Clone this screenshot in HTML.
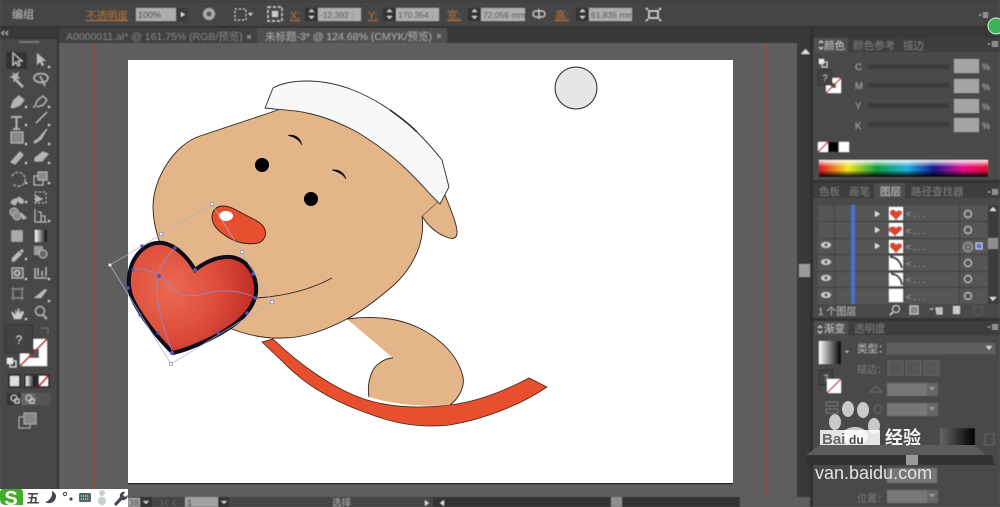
<!DOCTYPE html>
<html><head><meta charset="utf-8"><style>
html,body{margin:0;padding:0;width:1000px;height:507px;overflow:hidden;background:#5e5e5e}
svg{display:block}
text{font-family:"Liberation Sans","Noto Sans CJK SC",sans-serif}
.ch{filter:url(#b)}
.wm{filter:url(#c)}
</style></head><body>
<svg width="1000" height="507" viewBox="0 0 1000 507" xmlns="http://www.w3.org/2000/svg">
<defs>
<filter id="b" x="-2%" y="-2%" width="104%" height="104%"><feGaussianBlur stdDeviation="0.5"/></filter>
<filter id="c" x="-5%" y="-5%" width="110%" height="110%"><feGaussianBlur stdDeviation="0.35"/></filter>
<radialGradient id="hg" gradientUnits="userSpaceOnUse" cx="170" cy="288" r="85"><stop offset="0" stop-color="#ea6a52"/><stop offset=".55" stop-color="#de4e3b"/><stop offset="1" stop-color="#c02c28"/></radialGradient>
<linearGradient id="spec" x1="0" x2="1" y1="0" y2="0"><stop offset="0" stop-color="#e01020"/><stop offset=".17" stop-color="#f5e820"/><stop offset=".34" stop-color="#10a040"/><stop offset=".52" stop-color="#20b0e0"/><stop offset=".68" stop-color="#151a90"/><stop offset=".85" stop-color="#e81090"/><stop offset="1" stop-color="#e01030"/></linearGradient>
<linearGradient id="sw" x1="0" x2="0" y1="0" y2="1"><stop offset="0" stop-color="#fff" stop-opacity=".95"/><stop offset=".4" stop-color="#fff" stop-opacity="0"/><stop offset=".6" stop-color="#000" stop-opacity="0"/><stop offset="1" stop-color="#000"/></linearGradient>
<linearGradient id="gw" x1="0" x2="1" y1="0" y2="0"><stop offset="0" stop-color="#fff"/><stop offset="1" stop-color="#000"/></linearGradient>
<linearGradient id="gd" x1="0" x2="1" y1="0" y2="0"><stop offset="0" stop-color="#666"/><stop offset="1" stop-color="#000"/></linearGradient>
</defs>

<rect width="1000" height="507" fill="#5e5e5e"/>
<rect x="94" y="43" width="1.2" height="454" fill="#8f4a4a"/>
<rect x="766" y="43" width="1.2" height="454" fill="#8f4a4a"/>
<rect x="128" y="60" width="605" height="423" fill="#fff"/>
<rect x="128" y="483" width="605" height="1.2" fill="#222"/>

<g class="ch">
<rect width="1000" height="27" fill="#454545"/>
<rect y="0" width="1000" height="2" fill="#3d3d3d"/>
<rect y="26" width="1000" height="2" fill="#333"/>
<text x="12" y="18" font-size="11" fill="#b5b5b5">编组</text>
<text x="86" y="19" font-size="10.500" fill="#a8703a" text-decoration="underline">不透明度</text>
<text x="129" y="19" font-size="9" fill="#a8703a">:</text>
<rect x="136" y="8" width="40" height="13" fill="#aeaeae"/><text x="138" y="18" font-size="9" fill="#333">100%</text>
<rect x="176" y="8" width="12" height="13" fill="#3a3a3a"/><path d="M181 12l4 2.500-4 2.500z" fill="#ddd"/>
<circle cx="209" cy="14" r="6" fill="#aaa"/><circle cx="209" cy="14" r="2.500" fill="#555"/>
<rect x="235" y="9" width="11" height="11" fill="none" stroke="#ccc" stroke-dasharray="2 2"/><path d="M248 13h5l-2.500 3z" fill="#ccc"/>
<rect x="268" y="7" width="14" height="14" fill="none" stroke="#ccc" stroke-width="1.400" stroke-dasharray="3 2"/><rect x="272" y="11" width="6" height="6" fill="#ccc"/>
<text x="290" y="19" font-size="11" fill="#a8703a" text-decoration="underline">X:</text>
<text x="368" y="19" font-size="11" fill="#a8703a" text-decoration="underline">Y:</text>
<text x="447" y="19" font-size="11" fill="#a8703a" text-decoration="underline">宽:</text>
<text x="555" y="19" font-size="11" fill="#a8703a" text-decoration="underline">高:</text>
<g fill="#333"><rect x="305" y="8" width="13" height="13"/><rect x="383" y="8" width="13" height="13"/><rect x="468" y="8" width="13" height="13"/><rect x="576" y="8" width="13" height="13"/></g>
<path fill="#ccc" d="M308.500 12l3-3 3 3zM308.500 16h6l-3 3zM386.500 12l3-3 3 3zM386.500 16h6l-3 3zM471.500 12l3-3 3 3zM471.500 16h6l-3 3zM579.500 12l3-3 3 3zM579.500 16h6l-3 3z"/>
<g fill="#aeaeae"><rect x="318" y="8" width="43" height="13"/><rect x="396" y="8" width="43" height="13"/><rect x="481" y="8" width="44" height="13"/><rect x="589" y="8" width="43" height="13"/></g>
<g font-size="8.500" fill="#4a4a4a"><text x="320" y="18">-12.392 :</text><text x="398" y="18">170.354 :</text><text x="483" y="18">72.056 mm</text><text x="591" y="18">61.835 mm</text></g>
<path d="M536 11h6a3 3 0 0 1 0 6h-6a3 3 0 0 1 0-6M539 9v10" fill="none" stroke="#ccc" stroke-width="1.200"/>
<g fill="none" stroke="#ddd" stroke-width="1.400"><rect x="649" y="11" width="9" height="7"/><path d="M648 10l-2-2M659 10l2-2M648 19l-2 2M659 19l2 2"/></g>
<path d="M979 15h2M983 13h5M983 15h5M983 17h5" stroke="#bbb" fill="none"/>

<rect y="28" width="812" height="15" fill="#383838"/>
<rect x="58" y="28" width="199" height="15" fill="#404040"/>
<rect x="257" y="28" width="190" height="15" fill="#505050"/>
<text x="66" y="40" font-size="10.500" fill="#7f7f7f">A0000011.ai* @ 161.75% (RGB/预览)</text>
<text x="249" y="40" font-size="9" fill="#bbb" text-anchor="middle">×</text>
<text x="265" y="40" font-size="10.500" fill="#a8a8a8">未标题-3* @ 124.68% (CMYK/预览)</text>
<text x="439" y="39" font-size="9" fill="#bbb" text-anchor="middle">×</text>

<rect y="28" width="57" height="469" fill="#474747"/>
<rect y="28" width="57" height="11" fill="#383838"/>
<rect x="57" y="28" width="2" height="469" fill="#303030"/>
<path d="M4 31l-2 2 2 2M8 31l-2 2 2 2" stroke="#bbb" fill="none"/>
<rect x="19" y="41" width="20" height="2" fill="#777"/>
<rect x="6" y="52" width="21" height="17" fill="#333"/>
<path d="M13 53v12l3-3 2 4 2-1-2-4h4z" fill="none" stroke="#ccc"/>
<path d="M37 53v12l3-3 2 4 2-1-2-4h4z" fill="#bbb"/>
<g fill="#b5b5b5" stroke="#b5b5b5" stroke-width="1">
<path d="M15 79l8 8" stroke-width="2.400"/><path d="M13 73l1 3-3 1 3 1 0 3 2-3 3 0-2-2 1-3-3 2z"/>
<ellipse cx="41" cy="78" rx="7" ry="4.500" fill="none" stroke-width="1.500"/><path d="M40 76l5 10" stroke-width="1.500"/>
<path d="M11 107l3-7 5-4 5 4-4 5-7 3z"/><path d="M33 107c4 0 2-6 6-8l4-3 4 4-4 5-6 2" fill="none" stroke-width="1.300"/>
<path d="M11 117h11M16.500 117v12M13 129h7" stroke-width="1.800" fill="none"/>
<path d="M36 123l11-11" stroke-width="1.300"/>
<rect x="11" y="132" width="12" height="11" fill="#888"/>
<path d="M34 142c3-3 4-2 5-4l8-9-6 10-6 4z"/>
<path d="M11 162l9-10 3 3-8 9z"/>
<path d="M35 158l8-6 5 2-6 7h-7z"/>
<path d="M12 176a7 7 0 1 1 1 8" fill="none" stroke-dasharray="3 1.500"/>
<rect x="34" y="176" width="9" height="9" fill="none"/><rect x="38" y="172" width="9" height="8" fill="#888"/>
<path d="M11 203c2-6 6-2 8-6 2 3 5 1 4 6h-3l-2-3-3 5z"/>
<rect x="35" y="192" width="11" height="11" fill="none" stroke-dasharray="2 2"/><path d="M36 196l6 3-6 3z"/>
<circle cx="14" cy="212" r="4" fill="#888"/><circle cx="17" cy="216" r="4" fill="#888"/><path d="M21 213l5 5-3 1z"/>
<path d="M35 209v13h12M38 212h3v10h-3M42 216h3v6h-3" fill="none"/>
</g>
<rect x="11" y="230" width="12" height="12" fill="#aaa" stroke="#555" stroke-dasharray="2 1"/>
<rect x="35" y="230" width="12" height="12" fill="url(#gw)"/>
<path d="M12 258l7-7 3 3-7 7-3 1zM20 251l2-2 2 2-2 2z" fill="#bbb"/>
<rect x="34" y="246" width="9" height="9" fill="#999"/><circle cx="43" cy="254" r="4" fill="#666" stroke="#bbb"/>
<rect x="12" y="268" width="11" height="10" fill="#666" stroke="#bbb"/><circle cx="17" cy="273" r="2.500" fill="none" stroke="#ddd"/>
<path d="M35 268v10h12M38 268v8M42 271v5M46 267v9" stroke="#bbb" fill="none" stroke-width="1.300"/>
<rect x="13" y="289" width="9" height="9" fill="none" stroke="#aaa" stroke-width="1.300"/><path d="M11 289h13M11 298h13M13 287v13M22 287v13" stroke="#888"/>
<path d="M34 298l11-9 2 1-6 8z" fill="#bbb"/>
<path d="M11 311l3 8h7l3-7-2-1-2 3v-6l-1 5-1-6-1 6-2-4 1 6z" fill="#ccc"/>
<circle cx="40" cy="311" r="4.500" fill="none" stroke="#aaa" stroke-width="1.500"/><path d="M43 315l4 4" stroke="#aaa" stroke-width="2"/>
<g fill="#ccc"><rect x="48" y="66" width="2" height="2"/><rect x="25" y="106" width="2" height="2"/><rect x="48" y="106" width="2" height="2"/><rect x="25" y="124" width="2" height="2"/><rect x="48" y="124" width="2" height="2"/><rect x="25" y="143" width="2" height="2"/><rect x="48" y="143" width="2" height="2"/><rect x="25" y="162" width="2" height="2"/><rect x="48" y="162" width="2" height="2"/><rect x="25" y="182" width="2" height="2"/><rect x="48" y="182" width="2" height="2"/><rect x="25" y="201" width="2" height="2"/><rect x="48" y="220" width="2" height="2"/><rect x="25" y="258" width="2" height="2"/><rect x="25" y="278" width="2" height="2"/><rect x="48" y="278" width="2" height="2"/><rect x="48" y="300" width="2" height="2"/><rect x="25" y="318" width="2" height="2"/></g>
<rect x="20" y="339" width="27" height="27" fill="#fff"/>
<rect x="29" y="349" width="10" height="9" fill="#555"/>
<path d="M20 366l27-27" stroke="#b02a30" stroke-width="1.800"/>
<rect x="5" y="325" width="28" height="28" fill="#434343" stroke="#333"/>
<text x="19" y="344" font-size="12" fill="#ccc" text-anchor="middle">?</text>
<path d="M41 328h7v6" stroke="#777" fill="none"/>
<rect x="7" y="358" width="6" height="6" fill="#eee"/><rect x="10" y="361" width="6" height="6" fill="none" stroke="#ddd"/>
<rect x="8" y="374" width="13" height="14" fill="#2e2e2e"/><rect x="10" y="376" width="9" height="10" fill="#ddd"/>
<rect x="24" y="374" width="13" height="14" fill="#2e2e2e"/><rect x="26" y="376" width="9" height="10" fill="url(#gw)"/>
<rect x="37" y="374" width="13" height="14" fill="#2e2e2e"/><rect x="39" y="376" width="9" height="10" fill="#fff"/><path d="M39 386l9-10" stroke="#d01020" stroke-width="2"/>
<rect x="7" y="393" width="14" height="12" fill="#333"/><rect x="21" y="393" width="15" height="12" fill="#666"/><rect x="36" y="393" width="15" height="12" fill="#555"/>
<g fill="none" stroke="#ccc"><circle cx="14" cy="398" r="3"/><rect x="15" y="399" width="4" height="4"/><circle cx="29" cy="398" r="3"/><rect x="30" y="399" width="4" height="4"/></g>
<rect x="19" y="417" width="11" height="11" fill="none" stroke="#aaa"/><rect x="24" y="413" width="12" height="11" fill="#888" stroke="#aaa"/>

<rect x="797" y="43" width="15" height="454" fill="#383838"/>
<path d="M801 54l4.500-5 4.500 5z" fill="#e0e0e0"/>
<rect x="799" y="264" width="12" height="13" fill="#9a9a9a"/>
<rect x="795" y="28" width="17" height="15" fill="#383838"/>

<rect x="128" y="497" width="669" height="10" fill="#444"/>
<rect x="128" y="498" width="17" height="9" fill="#aaa"/>
<text x="129" y="506" font-size="9" fill="#333">38</text>
<rect x="140" y="497" width="12" height="10" fill="#333"/><path d="M143 501h6l-3 3z" fill="#ccc"/>
<path d="M162 500v6M168 500l-3 3 3 3M176 500l-3 3 3 3" stroke="#666" fill="none"/>
<rect x="185" y="497" width="33" height="10" fill="#a0a0a0"/><rect x="218" y="497" width="11" height="10" fill="#333"/><path d="M221 501h6l-3 3z" fill="#ccc"/>
<text x="187" y="506" font-size="9" fill="#333">1</text>
<text x="332" y="506" font-size="9.500" fill="#aaa">选择</text>
<path d="M425 500l4 3-4 3z" fill="#ddd"/>
<rect x="433" y="497" width="307" height="10" fill="#333"/>
<path d="M444 500l-4 3 4 3z" fill="#ddd"/>
<rect x="611" y="497" width="11" height="10" fill="#8d8d8d"/>
<rect x="740" y="497" width="57" height="10" fill="#5e5e5e"/>

<rect x="812" y="28" width="188" height="479" fill="#4a4a4a"/>
<rect x="812" y="28" width="188" height="10" fill="#383838"/>
<rect x="810" y="28" width="3" height="479" fill="#2f2f2f"/>
<rect x="813" y="38" width="187" height="14" fill="#3d3d3d"/>
<rect x="814" y="38" width="34" height="14" fill="#505050"/>
<path d="M819 43l2-2 2 2M819 47l2 2 2-2" stroke="#ddd" fill="none"/>
<text x="824" y="49" font-size="10.500" fill="#c0c0c0">颜色</text>
<text x="853" y="49" font-size="10.500" fill="#7b7b7b">颜色参考</text>
<text x="903" y="49" font-size="10.500" fill="#7b7b7b">描边</text>
<path d="M988 44h2M992 42h6M992 44h6M992 46h6" stroke="#bbb" fill="none"/>
<rect x="819" y="59" width="5" height="5" fill="#eee"/><rect x="822" y="62" width="5" height="5" fill="none" stroke="#ccc"/>
<rect x="826" y="78" width="15" height="15" fill="#fff"/><rect x="831" y="83" width="5" height="5" fill="#555"/><path d="M826 93l15-15" stroke="#b02a30" stroke-width="1.300"/>
<rect x="818" y="70" width="14" height="15" fill="#434343" stroke="#333"/><text x="825" y="81" font-size="9" fill="#bbb" text-anchor="middle">?</text>
<g font-size="9.500" fill="#a5a5a5"><text x="855" y="70">C</text><text x="855" y="89">M</text><text x="855" y="109">Y</text><text x="855" y="129">K</text></g>
<g fill="#3b3b3b"><rect x="868" y="64" width="81" height="5"/><rect x="868" y="83" width="81" height="5"/><rect x="868" y="103" width="81" height="5"/><rect x="868" y="122" width="81" height="5"/></g>
<g fill="#a5a5a5"><rect x="954" y="59" width="25" height="14"/><rect x="954" y="79" width="25" height="14"/><rect x="954" y="99" width="25" height="14"/><rect x="954" y="118" width="25" height="14"/></g>
<g font-size="9" fill="#aaa"><text x="982" y="70">%</text><text x="982" y="90">%</text><text x="982" y="110">%</text><text x="982" y="129">%</text></g>
<rect x="818" y="142" width="10" height="10" fill="#fff"/><path d="M818 152l10-10" stroke="#c0202a" stroke-width="1.300"/><rect x="828" y="142" width="10" height="10" fill="#000"/><rect x="839" y="142" width="10" height="10" fill="#fff"/>
<rect x="819" y="160" width="169" height="17" fill="url(#spec)"/><rect x="819" y="160" width="169" height="17" fill="url(#sw)"/>

<rect x="813" y="180" width="187" height="3" fill="#333"/>
<rect x="813" y="183" width="187" height="15" fill="#3d3d3d"/>
<rect x="874" y="183" width="31" height="15" fill="#505050"/>
<text x="819" y="195" font-size="10.500" fill="#7b7b7b">色板</text>
<text x="849" y="195" font-size="10.500" fill="#7b7b7b">画笔</text>
<text x="880" y="195" font-size="10.500" fill="#c0c0c0">图层</text>
<text x="911" y="195" font-size="10.500" fill="#7b7b7b">路径查找器</text>
<path d="M988 192h2M992 190h6M992 192h6M992 194h6" stroke="#bbb" fill="none"/>
<rect x="813" y="198" width="187" height="122" fill="#4a4a4a"/>
<rect x="818" y="205" width="170" height="99" fill="#555"/>
<g fill="#3c3c3c"><rect x="818" y="221" width="170" height="1"/><rect x="818" y="238" width="170" height="1"/><rect x="818" y="254" width="170" height="1"/><rect x="818" y="271" width="170" height="1"/><rect x="818" y="287" width="170" height="1"/><rect x="834" y="205" width="1" height="99"/><rect x="851" y="205" width="1" height="99"/><rect x="903" y="205" width="1" height="99"/><rect x="959" y="205" width="1" height="99"/></g>
<rect x="851" y="205" width="4" height="99" fill="#4a70c8"/>
<path d="M875 211l5 3-5 3zM875 227l5 3-5 3zM875 243l5 3-5 3z" fill="#ddd"/>
<g fill="#fff"><rect x="889" y="207" width="14" height="13"/><rect x="889" y="223" width="14" height="13"/><rect x="889" y="240" width="14" height="13"/><rect x="889" y="256" width="14" height="14"/><rect x="889" y="273" width="14" height="13"/><rect x="889" y="289" width="14" height="13"/></g>
<g fill="#d9442f"><path d="M896 220l-6-6c-1-5 5-6 6-2 2-3 7-2 6 2z"/><path d="M895 236l-6-5c-1-5 5-6 7-3 2-3 7-2 6 2z"/><path d="M896 253l-6-6c-1-5 5-6 6-2 2-3 7-2 6 2z"/></g>
<path d="M890 257c6 0 10 4 12 11M891 274c6 0 10 4 11 11" stroke="#111" stroke-width="2" fill="none"/>
<g font-size="9" fill="#a5a5a5" letter-spacing="2"><text x="906" y="217">&lt;...</text><text x="906" y="234">&lt;...</text><text x="906" y="250">&lt;...</text><text x="906" y="267">&lt;...</text><text x="906" y="283">&lt;...</text><text x="906" y="300">&lt;...</text></g>
<g fill="none" stroke="#ccc"><circle cx="968" cy="214" r="3.500"/><circle cx="968" cy="230" r="3.500"/><circle cx="968" cy="263" r="3.500"/><circle cx="968" cy="279" r="3.500"/><circle cx="968" cy="296" r="3.500"/></g>
<circle cx="968" cy="247" r="5.500" fill="#8a8a8a"/><circle cx="968" cy="247" r="2.500" fill="none" stroke="#333"/>
<rect x="976" y="243" width="6" height="6" fill="#5578d8" stroke="#ccd"/>
<g fill="#ccc"><ellipse cx="826" cy="245" rx="5" ry="3"/><ellipse cx="826" cy="262" rx="5" ry="3"/><ellipse cx="826" cy="278" rx="5" ry="3"/><ellipse cx="826" cy="295" rx="5" ry="3"/></g>
<g fill="#444"><circle cx="826" cy="245" r="1.500"/><circle cx="826" cy="262" r="1.500"/><circle cx="826" cy="278" r="1.500"/><circle cx="826" cy="295" r="1.500"/></g>
<rect x="988" y="205" width="10" height="99" fill="#3a3a3a"/>
<path d="M989.500 211l3.500-4 3.500 4zM989.500 297l3.500 4 3.500-4z" fill="#ddd"/>
<rect x="988" y="238" width="10" height="11" fill="#8e8e8e"/>
<text x="818" y="315" font-size="10" fill="#b5b5b5">1 个图层</text>
<circle cx="896" cy="309" r="3.500" fill="none" stroke="#ccc"/><path d="M893 312l-3 3" stroke="#ccc" stroke-width="1.500"/>
<rect x="910" y="306" width="8" height="8" fill="#888" stroke="#ccc"/>
<path d="M930 309h3M936 308h6v6h-5z" stroke="#ccc" fill="#bbb"/>
<rect x="953" y="306" width="7" height="8" fill="#ccc"/>
<rect x="974" y="307" width="8" height="8" fill="none" stroke="#5e5e5e"/>

<rect x="813" y="318" width="187" height="3" fill="#333"/>
<rect x="813" y="321" width="187" height="14" fill="#3d3d3d"/>
<rect x="814" y="321" width="34" height="14" fill="#505050"/>
<path d="M818 328l2-2 2 2M818 331l2 2 2-2" stroke="#ddd" fill="none"/>
<text x="824" y="332" font-size="10.500" fill="#c0c0c0">渐变</text>
<text x="854" y="332" font-size="10.500" fill="#7b7b7b">透明度</text>
<path d="M988 327h2M992 325h6M992 327h6M992 329h6" stroke="#bbb" fill="none"/>
<rect x="819" y="341" width="22" height="23" fill="url(#gw)"/>
<path d="M845 351h4l-2 2z" fill="#ccc"/>
<text x="857" y="352" font-size="10.500" fill="#b0b0b0">类型：</text>
<rect x="886" y="342" width="110" height="13" fill="#5e5e5e" stroke="#444"/><path d="M986 346h6l-3 4z" fill="#ddd"/>
<text x="857" y="373" font-size="10" fill="#777">描边：</text>
<g fill="#555" stroke="#666"><rect x="888" y="361" width="15" height="14"/><rect x="906" y="361" width="15" height="14"/><rect x="924" y="361" width="15" height="14"/></g>
<rect x="819" y="370" width="14" height="15" fill="#434343" stroke="#333"/><text x="826" y="381" font-size="9" fill="#bbb" text-anchor="middle">?</text>
<rect x="827" y="379" width="14" height="14" fill="#fff"/><path d="M827 393l14-14" stroke="#b02a30" stroke-width="1.300"/>
<rect x="887" y="383" width="40" height="13" fill="#777"/><rect x="927" y="383" width="11" height="13" fill="#666"/><path d="M929 387h6l-3 4z" fill="#999"/>
<rect x="887" y="403" width="40" height="13" fill="#777"/><rect x="927" y="403" width="11" height="13" fill="#666"/><path d="M929 407h6l-3 4z" fill="#999"/>
<path d="M870 392l6-6 6 6z" fill="none" stroke="#6a6a6a"/>
<circle cx="878" cy="409" r="4" fill="none" stroke="#6a6a6a"/>
<rect x="826" y="402" width="12" height="4" fill="none" stroke="#777"/><rect x="826" y="409" width="12" height="4" fill="none" stroke="#777"/>
<rect x="940" y="428" width="35" height="18" fill="url(#gd)"/>
<rect x="985" y="434" width="9" height="11" fill="none" stroke="#666"/>
<rect x="887" y="468" width="50" height="15" fill="#777"/>
<text x="857" y="502" font-size="10" fill="#777">位置：</text>
<rect x="887" y="490" width="40" height="13" fill="#777"/><rect x="927" y="490" width="11" height="13" fill="#666"/><path d="M929 494h6l-3 4z" fill="#999"/>
</g>

<g class="wm">
<circle cx="576" cy="88" r="21" fill="#e6e6e6" stroke="#222" stroke-width="1"/>
<path d="M262 342L273 339C300 365 335 390 367 400C400 410 440 408 467 402C490 397 510 388 529 378L547 387C525 402 490 418 450 425C420 428 395 424 367 413C335 402 305 385 283 362Z" fill="#e8502f" stroke="#4a2015" stroke-width="0.800"/>
<path d="M347 319C375 315 400 319 417 327C440 338 458 355 463 377C465 388 458 399 450 405C425 407 395 405 369 397C367 385 370 374 375 367C381 361 387 358 393 358Z" fill="#e5b58a"/>
<path d="M347 319C375 315 400 319 417 327C440 338 458 355 463 377C465 388 458 399 450 405M369 397C367 385 370 374 375 367C381 361 387 358 393 358" fill="none" stroke="#2e261c" stroke-width="0.900"/>
<path d="M445 195C450 208 458 226 457 234C456 240 450 239 444 236C435 232 428 226 422 216Z" fill="#e5b58a" stroke="#2e261c" stroke-width="0.900"/>
<path d="M278 110L200 136C175 144 153 178 153 207C153 250 190 308 222 325C240 333 262 339 283 338C305 338 328 329 347 319C360 312 375 301 388 290C405 277 417 258 421 240C423 230 423 222 422 216L445 195C420 150 350 110 278 110Z" fill="#e5b58a"/>
<path d="M278 110L200 136C175 144 153 178 153 207C153 250 190 308 222 325C240 333 262 339 283 338C305 338 328 329 347 319C360 312 375 301 388 290C405 277 417 258 421 240C423 230 423 222 422 216" fill="none" stroke="#2e261c" stroke-width="0.900"/>
<path d="M265 108L273 88C280 84 290 81 307 81C325 81 340 85 353 90C368 96 380 103 390 110C400 117 409 124 417 132C426 141 435 151 442 160L449 187L440 204C430 195 420 182 407 170C392 155 375 143 357 132C340 123 322 116 307 113C295 110 280 110 265 108Z" fill="#f8f8f8" stroke="#2e2e2e" stroke-width="0.900"/>
<path d="M390 110C400 117 409 124 417 132" fill="none" stroke="#222" stroke-width="1.500"/>
<circle cx="262" cy="165" r="7" fill="#000"/><circle cx="311" cy="199" r="7" fill="#000"/>
<path d="M288 135.500C294 134 300 137 302 145C299 139 294 137 288 135.500Z" fill="#111" stroke="#111" stroke-width=".6"/>
<path d="M332 170C338 169 344 172 346 179C343 174 338 172 332 170Z" fill="#111" stroke="#111" stroke-width=".6"/>
<path d="M257 298C285 296 310 290 332 278" fill="none" stroke="#2e261c" stroke-width="0.900"/>
<path d="M212 217C212 210 217 206 223 206C229 206 234 209 240 212C248 217 258 220 263 226C268 233 265 241 258 243C248 245 236 243 226 236C218 231 212 225 212 217Z" fill="#e8502f" stroke="#2e1a10" stroke-width="0.900"/>
<ellipse cx="226" cy="216" rx="7" ry="5" fill="#fff"/>

<path d="M195 270C205 262 218 256 231 257C245 259 254 270 256 285C258 300 248 315 232 326C215 338 190 349 173 353C160 340 145 322 135 304C128 292 127 278 132 264C138 250 150 241 163 243C176 245 188 258 195 270Z" fill="url(#hg)" stroke="#0a0a1c" stroke-width="4"/>
<g fill="none" stroke="#8d8fd8" stroke-width="0.900" opacity=".8">
<path d="M110 265L212 204L272 302L171 364Z" stroke="#b0b0c8"/>
<path d="M133 269C150 268 160 275 170 285C180 295 185 297 200 295C220 288 240 290 257 298"/>
<path d="M175 248C162 260 155 275 157 290C158 310 162 325 173 353"/>
</g>
<g fill="#fff" stroke="#8888b0" stroke-width=".7"><rect x="108.500" y="263.500" width="3" height="3"/><rect x="210.500" y="202.500" width="3" height="3"/><rect x="270.500" y="300.500" width="3" height="3"/><rect x="169.500" y="362.500" width="3" height="3"/><rect x="159.500" y="232.500" width="3" height="3"/><rect x="240.500" y="250.500" width="3" height="3"/></g>
<g fill="#5555b5"><circle cx="142" cy="246" r="1.700"/><circle cx="133" cy="270" r="1.700"/><circle cx="128" cy="288" r="1.700"/><circle cx="140" cy="315" r="1.700"/><circle cx="158" cy="333" r="1.700"/><circle cx="172" cy="353" r="2"/><circle cx="218" cy="333" r="1.700"/><circle cx="247" cy="313" r="1.700"/><circle cx="255" cy="298" r="1.700"/><circle cx="253" cy="274" r="1.700"/><circle cx="195" cy="270" r="2"/><circle cx="175" cy="248" r="1.700"/><circle cx="159" cy="276" r="2"/></g>
</g>

<g class="wm">
<rect x="0" y="489" width="128" height="18" fill="#fff"/>
<path d="M3 489h17c3 0 3 3 3 5v11H6c-4 0-6-2-6-6v-6c0-2 1-4 3-4z" fill="#3fae2a"/>
<text x="11" y="505" font-size="20" font-weight="bold" fill="#fff" text-anchor="middle">S</text>
<text x="33" y="503" font-size="13" font-weight="bold" fill="#444" text-anchor="middle">五</text>
<path d="M52 491c1 6-3 10-7 11 5 3 11 0 11-6 0-2-2-4-4-5z" fill="#445"/>
<circle cx="65" cy="494" r="1.600" fill="none" stroke="#445"/><circle cx="71" cy="499" r="1.600" fill="#445"/>
<rect x="79" y="493" width="12" height="9" rx="1.500" fill="#566"/><path d="M81 496h8M81 499h8" stroke="#fff" stroke-dasharray="1 1"/>
<circle cx="102" cy="493" r="3" fill="#c8d0d0"/><ellipse cx="102" cy="501" rx="4" ry="4.500" fill="#c8d0d0"/>
<path d="M114 504l6-7c-1-3 2-6 5-5l-2 3 2 2 3-2c0 3-3 6-6 5l-6 6z" fill="#445"/>

<path d="M806 455L820 445H975L985 455Z" fill="#5c5c5c"/>
<path d="M806 455H992L995 465H806Z" fill="#333"/>
<rect x="906" y="455" width="12" height="10" fill="#9b9b9b"/>
<g fill="#c9c9c9"><ellipse cx="848" cy="409" rx="6" ry="8"/><ellipse cx="863" cy="410" rx="6" ry="8"/><ellipse cx="835" cy="422" rx="6" ry="8"/><ellipse cx="874" cy="426" rx="6" ry="8"/><ellipse cx="855" cy="436" rx="13" ry="9"/></g>
<rect x="820" y="430" width="60" height="15" fill="#fff" opacity=".85"/>
<text x="822" y="444" font-size="15" font-weight="bold" fill="#666">Bai</text>
<text x="849" y="444" font-size="12" font-weight="bold" fill="#444">du</text>
<text x="885" y="444" font-size="18" font-weight="bold" fill="#f4f4f4">经验</text>
<text x="815" y="479" font-size="18" fill="#e3e3e3">van.baidu.com</text>
<circle cx="996" cy="26" r="8" fill="#3bb25a" stroke="#cdeed5"/>
</g>
</svg>
</body></html>
